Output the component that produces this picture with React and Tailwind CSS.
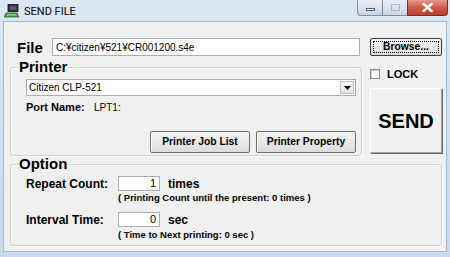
import React from "react";

const F = { fontFamily: '"Liberation Sans", Arial, sans-serif' };

function Btn({ children, className = "" }) {
  return (
    <div
      className={
        "flex items-center justify-center border border-[#707070] rounded-[2px] bg-gradient-to-b from-[#f4f4f4] to-[#dcdcdc] shadow-[inset_1px_1px_0_#fff] font-bold text-[10.3px] text-black " +
        className
      }
    >
      {children}
    </div>
  );
}

function Group({ label, className = "", children }) {
  return (
    <fieldset
      className={
        "border border-[#d0d0d0] shadow-[inset_1px_1px_0_#fff,1px_1px_0_#fff] rounded-[3px] m-0 p-0 min-w-0 " +
        className
      }
    >
      <legend className="ml-[7px] px-[1px] text-[15px] leading-[16px] font-bold text-black">
        {label}
      </legend>
      {children}
    </fieldset>
  );
}

export default function App() {
  return (
    <div
      style={F}
      className="w-[450px] h-[257px] bg-gradient-to-b from-[#dbe7f5] to-[#c8d9ee] flex flex-col overflow-hidden"
    >
      {/* Title bar */}
      <div className="h-[21px] flex items-start relative">
        <div className="flex items-center h-[21px] pl-[4px] gap-[4px]">
          <svg width="16" height="14" viewBox="0 0 16 14">
            <rect x="4" y="0.5" width="10" height="7" fill="#2b2f33" stroke="#111" strokeWidth="0.8" />
            <rect x="5.5" y="2" width="7" height="4" fill="#556" />
            <path d="M2 9 L13 9 L15 13 L0 13 Z" fill="#4a9c4a" stroke="#2d6b2d" strokeWidth="0.8" />
            <rect x="3" y="10.3" width="9" height="1.2" fill="#9fd59f" />
          </svg>
          <span style={{ fontFamily: 'Roboto, "Liberation Sans", sans-serif' }} className="text-[11px] text-black leading-none pt-[1px]">
            SEND FILE
          </span>
        </div>
        <div className="absolute right-[2px] top-0 flex h-[16px]">
          <div className="w-[25px] h-[16px] border border-[#7c8ea6] border-r-0 border-t-0 rounded-bl-[4px] bg-gradient-to-b from-[#e8eef6] to-[#c9d6e6] flex items-center justify-center">
            <div className="w-[9px] h-[3px] bg-white border border-[#4a5c78] mt-[4px]" />
          </div>
          <div className="w-[25px] h-[16px] border border-[#7c8ea6] border-r-0 border-t-0 bg-gradient-to-b from-[#e8eef6] to-[#c9d6e6] flex items-center justify-center">
            <div className="w-[9px] h-[7px] border border-[#9aa8ba] opacity-70" />
          </div>
          <div className="w-[41px] h-[16px] border border-[#7a2e28] border-t-0 rounded-br-[4px] bg-gradient-to-b from-[#e39a8f] via-[#cf5a4c] to-[#c23a2c] flex items-center justify-center">
            <svg width="11" height="9" viewBox="0 0 11 9">
              <path d="M1.5 1 L9.5 8 M9.5 1 L1.5 8" stroke="#fff" strokeWidth="2.4" strokeLinecap="square" />
            </svg>
          </div>
        </div>
      </div>

      {/* Client */}
      <div className="mx-[3px] mb-[5px] flex-1 bg-[#f0f0f0] border border-[#a6b8cf] pl-[6px] pr-[3px] pt-[16px] flex flex-col">
        <div className="flex">
          {/* left column */}
          <div className="w-[352px] flex flex-col">
            <div className="flex items-center h-[18px]">
              <span className="w-[42px] pl-[7px] text-[15px] font-bold text-black leading-none">File</span>
              <div className="w-[308px] h-[18px] bg-white border border-[#abadb3] flex items-center pl-[3px] text-[10px] text-black">
                C:¥citizen¥521¥CR001200.s4e
              </div>
            </div>
            <Group label="Printer" className="mt-[3px] h-[97px]">
              <div className="pl-[15px] pr-[4px] pt-[4px]">
                <div className="h-[17px] w-[330px] bg-white border border-[#abadb3] flex items-center justify-between pl-[2px] pr-[1px] text-[10px] text-black">
                  <span>Citizen CLP-521</span>
                  <div className="w-[14px] h-[13px] bg-gradient-to-b from-[#f6f6f6] to-[#e4e4e4] border border-[#c0c0c0] flex items-center justify-center">
                    <svg width="7" height="4" viewBox="0 0 7 4"><path d="M0 0 L7 0 L3.5 4 Z" fill="#000" /></svg>
                  </div>
                </div>
                <div className="flex items-center h-[14px] mt-[4px] text-[11px] text-black">
                  <span className="font-bold w-[68px]">Port Name:</span>
                  <span className="text-[10px]">LPT1:</span>
                </div>
                <div className="flex justify-end gap-[6px] mt-[17px] pr-[1px]">
                  <Btn className="w-[100px] h-[22px]">Printer Job List</Btn>
                  <Btn className="w-[100px] h-[22px]">Printer Property</Btn>
                </div>
              </div>
            </Group>
          </div>
          {/* right column */}
          <div className="ml-[8px] w-[72px] flex flex-col">
            <div className="h-[18px] border border-[#3c3c3c] rounded-[2px] bg-gradient-to-b from-[#f4f4f4] to-[#dcdcdc] p-[2px]">
              <div className="w-full h-full border border-dotted border-black flex items-center justify-center font-bold text-[10.3px] text-black leading-none">
                Browse...
              </div>
            </div>
            <div className="flex items-center mt-[12px] h-[12px] gap-[7px]">
              <div className="w-[10px] h-[10px] bg-white border border-[#8f8f8f] shadow-[inset_1px_1px_0_#ccc]" />
              <span className="font-bold text-[11px] text-black">LOCK</span>
            </div>
            <div className="mt-[8px] h-[65px] border border-t-white border-l-white border-r-[#a0a0a0] border-b-[#a0a0a0] shadow-[1px_1px_0_#696969] flex items-center justify-center">
              <span className="font-bold text-[20px] text-black">SEND</span>
            </div>
          </div>
        </div>
        <Group label="Option" className="mt-[0px] w-[432px] h-[90px]">
          <div className="pl-[15px] pt-[4px] text-[11px] text-black">
            <div className="flex items-center h-[15px]">
              <span className="font-bold w-[92px] text-[12px]">Repeat Count:</span>
              <div className="w-[42px] h-[15px] bg-white border border-[#abadb3] flex items-center justify-end pr-[3px]">1</div>
              <span className="font-bold ml-[8px] text-[12px]">times</span>
            </div>
            <div className="pl-[92px] font-bold text-[9.5px] mt-[1px] leading-[12px]">( Printing Count until the present: 0 times )</div>
            <div className="flex items-center h-[15px] mt-[8px]">
              <span className="font-bold w-[92px] text-[12px]">Interval Time:</span>
              <div className="w-[42px] h-[15px] bg-white border border-[#abadb3] flex items-center justify-end pr-[3px]">0</div>
              <span className="font-bold ml-[8px] text-[12px]">sec</span>
            </div>
            <div className="pl-[92px] font-bold text-[9.5px] mt-[2px] leading-[12px]">( Time to Next printing: 0 sec )</div>
          </div>
        </Group>
      </div>
    </div>
  );
}
